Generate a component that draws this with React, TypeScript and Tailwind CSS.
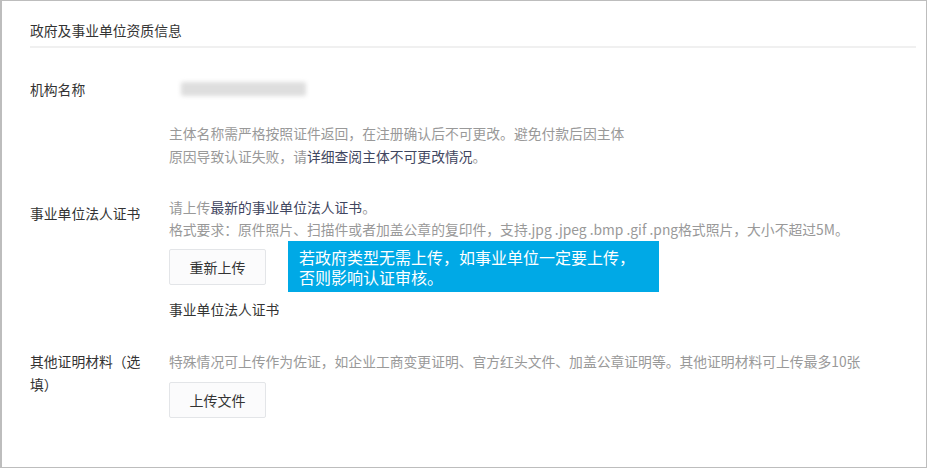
import React from 'react';

const font = { fontFamily: '"Microsoft YaHei", "Noto Sans CJK SC", "Noto Sans", sans-serif' };

function UploadButton({ children }: { children: React.ReactNode }) {
  return (
    <button className="w-[97px] h-[36px] border border-[#e3e5e8] bg-[#fbfbfc] rounded-[2px] text-[14px] text-[#333] flex items-center justify-center">
      {children}
    </button>
  );
}

export default function App() {
  return (
    <div className="w-[929px] h-[469px] bg-white" style={font}>
      <div className="w-[927px] h-[468px] border border-[#bdbdbd] border-l-2 pl-[28px] pr-[10px] text-[13.8px]">
        {/* Section title */}
        <div className="pt-[19px] pb-[6px] border-b-2 border-[#f0f0f0] text-[#333] leading-[20px]">
          政府及事业单位资质信息
        </div>

        {/* 机构名称 */}
        <div className="flex mt-[31px] leading-[20px]">
          <div className="w-[115px] mr-[24px] text-[#333]">机构名称</div>
          <div className="flex items-center h-[20px] ml-[12px]">
            <div className="w-[125px] h-[14px] bg-[#dedede] rounded-[2px] blur-[2px]"></div>
          </div>
        </div>
        <div className="ml-[139px] mt-[23px] leading-[23px] text-[#999]">
          主体名称需严格按照证件返回，在注册确认后不可更改。避免付款后因主体
          <br />
          原因导致认证失败，请<span className="text-[#3f4660]">详细查阅主体不可更改情况</span>。
        </div>

        {/* 事业单位法人证书 */}
        <div className="flex mt-[28px]">
          <div className="w-[115px] mr-[24px] mt-[7px] leading-[20px] text-[#333]">事业单位法人证书</div>
          <div className="relative flex-1">
            <div className="leading-[22px] text-[#999]">
              请上传<span className="text-[#3f4660]">最新的事业单位法人证书</span>。
            </div>
            <div className="leading-[22px] text-[#999]">
              格式要求：原件照片、扫描件或者加盖公章的复印件，支持.jpg .jpeg .bmp .gif .png格式照片，大小不超过5M。
            </div>
            <div className="mt-[9px]">
              <UploadButton>重新上传</UploadButton>
            </div>
            <div className="mt-[14px] leading-[20px] text-[#333]">事业单位法人证书</div>

            <div className="absolute left-[119px] top-[45px] w-[371px] h-[51px] bg-[#00a9e6] pl-[11px] pt-[6px] text-white text-[16px] leading-[20px]">
              若政府类型无需上传，如事业单位一定要上传，
              <br />
              否则影响认证审核。
            </div>
          </div>
        </div>

        {/* 其他证明材料 */}
        <div className="flex mt-[31px]">
          <div className="w-[115px] mr-[24px] leading-[23px] text-[#333]">其他证明材料（选填）</div>
          <div className="flex-1">
            <div className="leading-[22px] text-[#999]">
              特殊情况可上传作为佐证，如企业工商变更证明、官方红头文件、加盖公章证明等。其他证明材料可上传最多10张
            </div>
            <div className="mt-[10px]">
              <UploadButton>上传文件</UploadButton>
            </div>
          </div>
        </div>
      </div>
    </div>
  );
}
